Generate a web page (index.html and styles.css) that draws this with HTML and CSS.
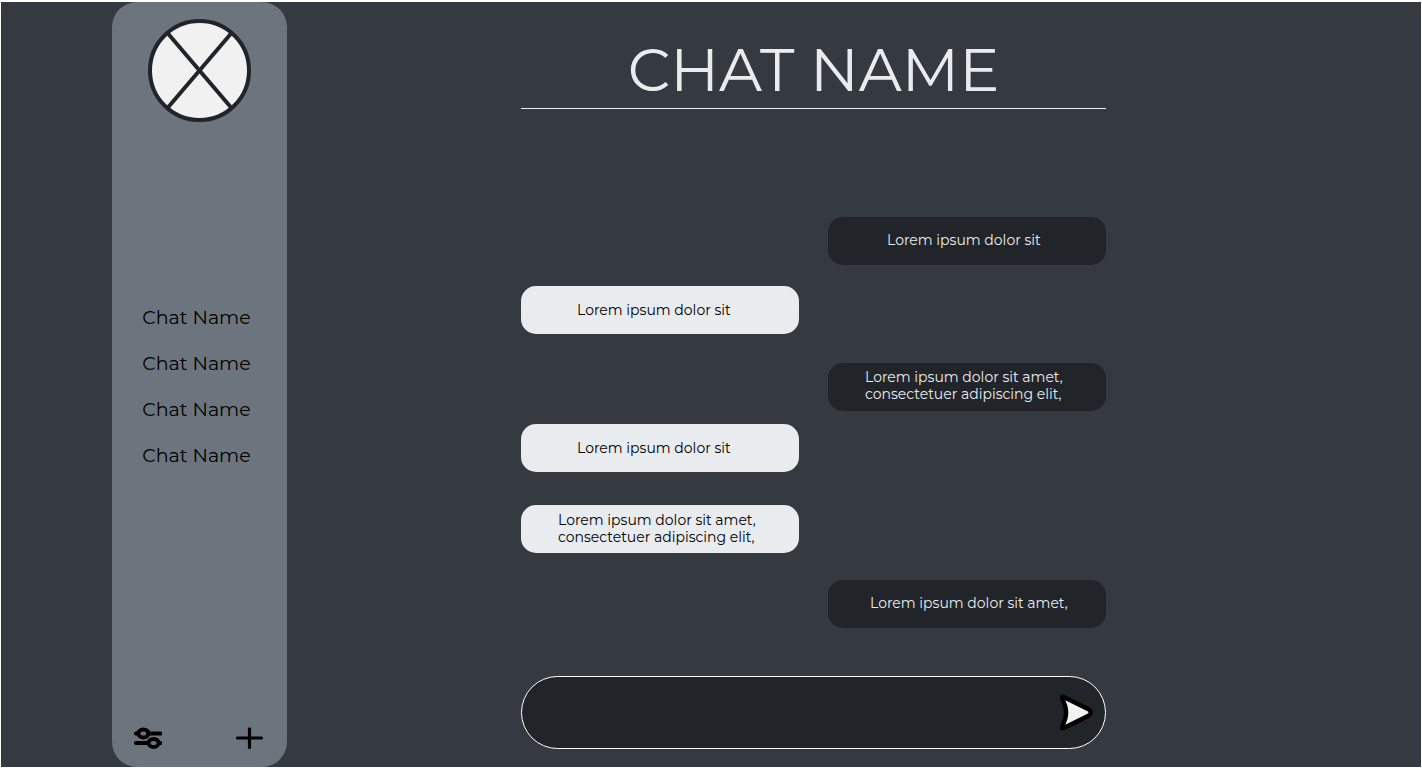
FILE: index.html
```html
<!DOCTYPE html>
<html lang="en">
<head>
<meta charset="utf-8">
<meta name="viewport" content="width=device-width, initial-scale=1">
<title>Chat Name</title>
<link rel="stylesheet" href="styles.css">
</head>
<body>
<div class="app">
  <aside class="sidebar">
    <button class="avatar" type="button" aria-label="Profile">
      <svg viewBox="0 0 104 104" aria-hidden="true">
        <circle cx="51.500" cy="52.500" r="49.500" fill="#f1f1f1" stroke="#212529" stroke-width="4"/>
        <path d="M19.500 15L83.500 90M83.500 15L19.500 90" stroke="#212529" stroke-width="4"/>
      </svg>
    </button>
    <nav class="chats" aria-label="Chats">
      <a class="chat-link" href="#">Chat Name</a>
      <a class="chat-link" href="#">Chat Name</a>
      <a class="chat-link" href="#">Chat Name</a>
      <a class="chat-link" href="#">Chat Name</a>
    </nav>
    <div class="tools">
      <button class="tool" type="button" aria-label="Settings">
        <svg viewBox="0 0 30 24" fill="none" stroke="#000" stroke-width="4" stroke-linecap="round" aria-hidden="true">
          <path d="M4 6.400H5M16 6.400H28.500M4 15.900H16M27 15.900H28.500"/>
          <ellipse cx="11.400" cy="6.400" rx="5" ry="4"/>
          <ellipse cx="21.600" cy="15.900" rx="5" ry="4"/>
        </svg>
      </button>
      <button class="tool" type="button" aria-label="New chat">
        <svg viewBox="0 0 30 24" fill="none" stroke="#000" stroke-width="3.200" stroke-linecap="round" aria-hidden="true">
          <path d="M2.500 11H26.500M14.500 1.800V20.500"/>
        </svg>
      </button>
    </div>
  </aside>
  <main class="conversation">
    <h1 class="title">CHAT NAME</h1>
    <div class="messages">
      <p class="message sent short">Lorem ipsum dolor sit</p>
      <p class="message received short">Lorem ipsum dolor sit</p>
      <p class="message sent long after-reply">Lorem ipsum dolor sit amet,<br>consectetuer adipiscing elit,</p>
      <p class="message received short close">Lorem ipsum dolor sit</p>
      <p class="message received long follow-up">Lorem ipsum dolor sit amet,<br>consectetuer adipiscing elit,</p>
      <p class="message sent medium last">Lorem ipsum dolor sit amet,</p>
    </div>
    <form class="composer">
      <input class="composer-input" type="text" aria-label="Message">
      <button class="send" type="button" aria-label="Send">
        <svg viewBox="0 0 36 38" aria-hidden="true">
          <path d="M5.200 2.800L30.500 15.300Q35 18.500 30.500 21.700L5.200 34.200Q3.500 34.500 4.300 32.500L7.200 25Q9 18.500 7.200 12L4.300 4.500Q3.500 2.500 5.200 2.800Z" fill="#f1f1f1" stroke="#000" stroke-width="4.400" stroke-linejoin="round"/>
        </svg>
      </button>
    </form>
  </main>
</div>
</body>
</html>
```
FILE: styles.css
```css
* {
  box-sizing: border-box;
}

body {
  margin: 0;
  padding: 2px 1px 1px;
  min-height: 100vh;
  display: flex;
  background: #fff;
  font-family: Montserrat, Inter, "Liberation Sans", sans-serif;
}

button {
  padding: 0;
  border: 0;
  background: none;
  cursor: pointer;
}

svg {
  display: block;
  width: 100%;
}

.app {
  flex: 1;
  display: grid;
  grid-template-columns: 111fr 175px 234fr minmax(0, 585fr) 315fr;
  background: #353940;
}

.sidebar {
  grid-column: 2;
  display: flex;
  flex-direction: column;
  align-items: center;
  justify-content: space-between;
  padding: 16px 20px;
  border-radius: 25px;
  background: #6c757d;
}

.avatar {
  width: 104px;
}

.chats {
  display: flex;
  flex-direction: column;
  gap: 22px;
  padding-right: 6px;
  margin-bottom: 76px;
}

.chat-link {
  color: #000;
  font-size: 19px;
  line-height: 24px;
  text-decoration: none;
  white-space: nowrap;
}

.tools {
  align-self: stretch;
  display: flex;
  justify-content: space-between;
  padding-right: 2px;
}

.tool {
  width: 30px;
}

.conversation {
  grid-column: 4;
  display: flex;
  flex-direction: column;
  padding-bottom: 18px;
}

.title {
  margin: 0;
  padding: 31px 0 2px;
  border-bottom: 1px solid #e9ecef;
  color: #e9ecef;
  font-size: 60px;
  font-weight: 400;
  line-height: 73px;
  text-align: center;
  white-space: nowrap;
}

.messages {
  flex: 1;
  display: flex;
  flex-direction: column;
  justify-content: flex-end;
  padding-bottom: 48px;
}

.message {
  display: flex;
  flex-direction: column;
  justify-content: center;
  width: 278px;
  min-height: 48px;
  margin: 21px 0 0;
  border-radius: 15px;
  font-size: 14px;
  line-height: 17px;
  white-space: nowrap;
}

.message.short {
  padding-left: 56px;
}

.message.sent.short {
  padding-left: 59px;
}

.message.medium {
  padding-left: 42px;
}

.message.long {
  padding-left: 37px;
}

.message.after-reply {
  margin-top: 29px;
}

.message.close {
  margin-top: 13px;
}

.message.follow-up {
  margin-top: 33px;
}

.message.last {
  margin-top: 27px;
}

.sent {
  align-self: flex-end;
  padding-bottom: 2px;
  background: #212529;
  color: #e9ecef;
}

.received {
  align-self: flex-start;
  background: #e9ecef;
  color: #000;
}

.composer {
  display: flex;
  align-items: center;
  height: 73px;
  padding: 0 11px 0 36px;
  border: 1px solid #fff;
  border-radius: 37px;
  background: #212529;
}

.composer-input {
  flex: 1;
  min-width: 0;
  height: 40px;
  border: 0;
  outline: 0;
  background: none;
  color: #e9ecef;
  font: inherit;
  font-size: 14px;
}

.send {
  width: 36px;
}
```
